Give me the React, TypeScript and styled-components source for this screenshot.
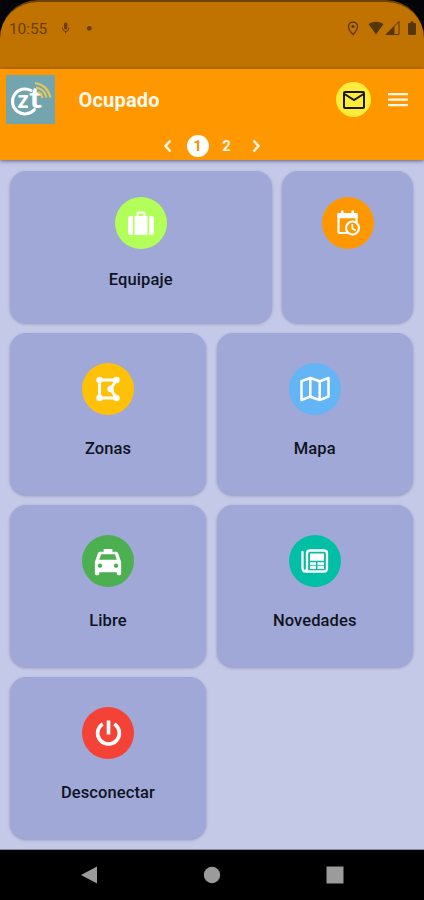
import React from "react";
import styled, { createGlobalStyle } from "styled-components";

const Global = createGlobalStyle`
  *, *::before, *::after { box-sizing: border-box; }
  body { margin: 0; background: #050509; font-family: Roboto, sans-serif; }
  svg { display: block; flex: none; }
`;

const Screen = styled.div`
  width: 424px;
  height: 900px;
  display: flex;
  flex-direction: column;
  overflow: hidden;
  background: #050509;
`;

const StatusBar = styled.header`
  height: 69px;
  flex: none;
  display: flex;
  align-items: flex-start;
  padding: 18px 7px 0 9px;
  background: #c07300;
  border-top: 2px solid #6e4204;
  border-radius: 38px 38px 0 0;
  color: #6a3e05;
`;

const Clock = styled.time`
  width: 50px;
  font: 400 15.5px/18px Roboto, sans-serif;
  letter-spacing: -0.1px;
`;

const StatusIcons = styled.div`
  margin-left: auto;
  display: flex;
  align-items: center;
  height: 18px;
`;

const AppBar = styled.div`
  height: 91px;
  flex: none;
  background: #ff9800;
  box-shadow: 0 1px 4px rgba(40, 40, 80, 0.65);
  z-index: 1;
`;

const TitleRow = styled.div`
  display: flex;
  align-items: center;
  height: 61px;
  padding: 0 16px 0 6px;
`;

const Title = styled.h1`
  margin: 1px 0 0 23.5px;
  flex: 1;
  color: #fff8ec;
  font: 700 20px/24px Roboto, sans-serif;
  letter-spacing: 0.2px;
`;

const MailButton = styled.button`
  width: 35px;
  height: 35px;
  margin: 0 17px 0 0;
  padding: 0;
  border: 0;
  border-radius: 50%;
  display: grid;
  place-items: center;
  background: #ffeb3b;
`;

const Pager = styled.nav`
  display: grid;
  grid-template-columns: 29px 30px 28px 30px;
  justify-content: center;
  align-items: center;
  justify-items: center;
  height: 31px;
  color: #fff8ec;
`;

const PageNumber = styled.span<{ $active?: boolean }>`
  width: 22px;
  height: 22px;
  border-radius: 50%;
  font: 700 15px/22px Roboto, sans-serif;
  text-align: center;
  background: ${(p) => (p.$active ? "#fff" : "transparent")};
  color: ${(p) => (p.$active ? "#ee9310" : "#fff8ec")};
`;

const Board = styled.main`
  height: 690px;
  flex: none;
  padding: 11px 11px 0 10px;
  display: grid;
  grid-template-columns: 196px 55px 131px;
  grid-template-rows: 152px 162px 162px 162px;
  gap: 10px 10.5px;
  background: #c5c9e8;
  border-bottom: 1px solid #8c8a9d;
`;

const Card = styled.button<{ $span: number; $short?: boolean }>`
  grid-column: span ${(p) => p.$span};
  min-width: 0;
  padding: ${(p) => (p.$short ? 26 : 29.5)}px 0 0;
  border: 0;
  border-radius: 16px;
  display: flex;
  flex-direction: column;
  align-items: center;
  gap: ${(p) => (p.$short ? 21 : 24.5)}px;
  background: #9fa8d7;
  box-shadow: 0 1px 3px rgba(70, 70, 115, 0.4);
`;

const Disc = styled.span<{ $color: string }>`
  width: 52px;
  height: 52px;
  flex: none;
  border-radius: 50%;
  display: grid;
  place-items: center;
  background: ${(p) => p.$color};
  color: #fff;
`;

const Label = styled.span`
  font: 500 16.5px/20px Roboto, sans-serif;
  letter-spacing: 0.1px;
  color: #10131f;
`;

const NavBar = styled.footer`
  height: 50px;
  flex: none;
  display: grid;
  grid-template-columns: repeat(3, 123px);
  justify-content: center;
  align-items: center;
  justify-items: center;
  padding-right: 1px;
  background: #000;
  color: #9b9b9b;
`;

const Logo = () => (
  <svg width="49" height="49" viewBox="0 0 49 49" role="img" aria-label="zt">
    <rect width="49" height="49" fill="#72a5ad" />
    <path d="M25 15.500A12.500 12.500 0 1 0 28.500 34.500" fill="none" stroke="#fff" strokeWidth="3" strokeLinecap="round" />
    <text x="11.500" y="33" fill="#fff" fontFamily="Lato, sans-serif" fontWeight="900" fontSize="24">z</text>
    <text x="23" y="33" fill="#fff" fontFamily="Lato, sans-serif" fontWeight="700" fontSize="28" textLength="13" lengthAdjust="spacingAndGlyphs">t</text>
    <g fill="none" stroke="#e6c85a" strokeWidth="2">
      <path d="M31 17q4.500 1 5.500 6" />
      <path d="M30 12.500q8.500 1.500 10.500 10" />
      <path d="M29 8q12.500 2 15.500 14.500" />
    </g>
  </svg>
);

const icons: Record<string, React.ReactNode> = {
  luggage: (
    <>
      <path d="M12.500 9.500V7Q12.500 5.500 14 5.500h4Q19.500 5.500 19.500 7v2.500" fill="none" stroke="currentColor" strokeWidth="2" />
      <path d="M9.500 9h13V28h-13zM7.800 9V28H6q-3 0-3-3V12q0-3 3-3zM24.200 9V28H26q3 0 3-3V12q0-3-3-3z" fill="currentColor" />
    </>
  ),
  schedule: (
    <>
      <path d="M16 26H8q-1.500 0-1.500-1.500V8.500Q6.500 7 8 7h15q1.500 0 1.500 1.500V16" fill="none" stroke="currentColor" strokeWidth="2.200" />
      <path d="M5.400 6h20.200v5.200H5.400zM9 3.500h2.500V8H9zM19.500 3.500H22V8h-2.500z" fill="currentColor" />
      <circle cx="20.500" cy="21" r="6.500" fill="#ff9800" stroke="currentColor" strokeWidth="2.200" />
      <path d="M20.300 17v4.500l3.300 2" fill="none" stroke="currentColor" strokeWidth="1.700" />
    </>
  ),
  zones: (
    <>
      <path d="M7.500 7H24.500L18.500 16 24.500 25H7.500z" fill="none" stroke="currentColor" strokeWidth="3" />
      <g fill="currentColor">
        <circle cx="7.500" cy="7" r="3.200" />
        <circle cx="24.500" cy="7" r="3.200" />
        <circle cx="18.500" cy="16" r="3.200" />
        <circle cx="7.500" cy="25" r="3.200" />
        <circle cx="24.500" cy="25" r="3.200" />
      </g>
    </>
  ),
  map: (
    <path d="M2.500 8.200 11.300 5l9.400 3.300L29.500 5v18.700L20.700 27l-9.400-3.300L2.500 27zM11.300 5v18.700M20.700 8.300V27" fill="none" stroke="currentColor" strokeWidth="2.500" strokeLinejoin="round" />
  ),
  taxi: (
    <g transform="translate(-1.500 -.5) scale(1.460)">
      <path fill="currentColor" d="M18.920 6.010C18.720 5.420 18.160 5 17.500 5H15V3H9v2H6.500c-.66 0-1.210.42-1.420 1.010L3 12v8c0 .55.45 1 1 1h1c.55 0 1-.45 1-1v-1h12v1c0 .55.45 1 1 1h1c.55 0 1-.45 1-1v-8zM6.500 16c-.83 0-1.500-.67-1.500-1.500S5.670 13 6.500 13s1.500.67 1.500 1.500S7.330 16 6.500 16zm11 0c-.83 0-1.500-.67-1.500-1.500s.67-1.500 1.500-1.500 1.500.67 1.500 1.500-.67 1.500-1.500 1.500zM6 10.500l1.300-3.800h9.400L18 10.500z" />
    </g>
  ),
  news: (
    <>
      <path d="M3.500 7v16q0 3.500 3.500 3.500h18q3 0 3-3v-15q0-3-3-3H11q-3 0-3 3V23q0 3.500-3 3.500" fill="none" stroke="currentColor" strokeWidth="2.300" strokeLinecap="round" />
      <path d="M11 8.500h14v7.200H11zM11 17.300h6V24h-6zM18.500 17.300H25V24h-6.500z" fill="currentColor" />
      <path d="M11 20.600h6M18.500 20.600H25" stroke="#00bfa5" strokeWidth=".8" />
    </>
  ),
  power: (
    <path d="M16 3.500V18M10 7.200a11.200 11.200 0 1 0 12 0" fill="none" stroke="currentColor" strokeWidth="3.800" />
  ),
};

const Icon = ({ name, size }: { name: string; size: number }) => (
  <svg width={size} height={size} viewBox="0 0 32 32" aria-hidden="true">{icons[name]}</svg>
);

const tiles = [
  { name: "Equipaje", icon: "luggage", size: 32, color: "#b2ff59", span: 2, short: true },
  { name: "", icon: "schedule", size: 32, color: "#ff9800", span: 1, short: true },
  { name: "Zonas", icon: "zones", size: 32, color: "#ffc107", span: 1 },
  { name: "Mapa", icon: "map", size: 32, color: "#64b5f6", span: 2 },
  { name: "Libre", icon: "taxi", size: 32, color: "#4caf50", span: 1 },
  { name: "Novedades", icon: "news", size: 32, color: "#00bfa5", span: 2 },
  { name: "Desconectar", icon: "power", size: 31, color: "#f44336", span: 1 },
];

const Chevron = ({ d }: { d: string }) => (
  <svg width="14" height="16" viewBox="0 0 14 16">
    <path d={d} fill="none" stroke="currentColor" strokeWidth="2.500" />
  </svg>
);

export default function App() {
  return (
    <>
      <Global />
      <Screen>
        <StatusBar>
          <Clock>10:55</Clock>
          <svg width="38" height="18" viewBox="0 0 38 18" fill="currentColor">
            <rect x="5" y="2.500" width="3.400" height="7" rx="1.700" />
            <path d="M3.500 7.500q0 4 3.200 4t3.200-4M6.700 11v2.500" fill="none" stroke="currentColor" />
            <circle cx="30.300" cy="8.300" r="2.400" />
          </svg>
          <StatusIcons>
            <svg width="72" height="18" viewBox="0 0 72 18" fill="#56370b">
              <path d="M8 14.500Q3.500 10 3.500 6.500a4.500 4.500 0 0 1 9 0Q12.500 10 8 14.500z" fill="none" stroke="#56370b" strokeWidth="1.300" />
              <circle cx="8" cy="6.500" r="1.600" />
              <path d="M23.500 4Q31-.5 38.500 4L31 14.500z" />
              <path d="M41 14.500 54 1.500v13z" fill="none" stroke="#56370b" strokeWidth="1" />
              <path d="M41 14.500 49.500 6v8.500zM64 3h1.500V1.500h3V3H70q1 0 1 1v10q0 1-1 1h-6q-1 0-1-1V4q0-1 1-1z" />
            </svg>
          </StatusIcons>
        </StatusBar>
        <AppBar>
          <TitleRow>
            <Logo />
            <Title>Ocupado</Title>
            <MailButton aria-label="Mensajes">
              <svg width="24" height="20" viewBox="0 0 24 20" fill="none" stroke="#191900" strokeWidth="2">
                <rect x="2" y="2" width="20" height="16" rx="1" />
                <path d="m2.500 4 9.500 6 9.500-6" />
              </svg>
            </MailButton>
            <svg width="20" height="16" viewBox="0 0 20 16" fill="#fff8ec">
              <path d="M0 1h20v2.300H0zM0 6.500h20v2.300H0zM0 12h20v2.300H0z" />
            </svg>
          </TitleRow>
          <Pager>
            <Chevron d="m9.500 2.500-5 5.500 5 5.500" />
            <PageNumber $active>1</PageNumber>
            <PageNumber>2</PageNumber>
            <Chevron d="m4.500 2.500 5 5.500-5 5.500" />
          </Pager>
        </AppBar>
        <Board>
          {tiles.map((t) => (
            <Card key={t.icon} $span={t.span} $short={t.short}>
              <Disc $color={t.color}><Icon name={t.icon} size={t.size} /></Disc>
              {t.name && <Label>{t.name}</Label>}
            </Card>
          ))}
        </Board>
        <NavBar>
          <svg width="18" height="18" viewBox="0 0 18 18" fill="currentColor"><path d="M1 9 17 .5v17z" /></svg>
          <svg width="18" height="18" viewBox="0 0 18 18" fill="currentColor"><circle cx="9" cy="9" r="8.200" /></svg>
          <svg width="18" height="18" viewBox="0 0 18 18" fill="currentColor"><path d="M.5.5h17v17H.5z" /></svg>
        </NavBar>
      </Screen>
    </>
  );
}
